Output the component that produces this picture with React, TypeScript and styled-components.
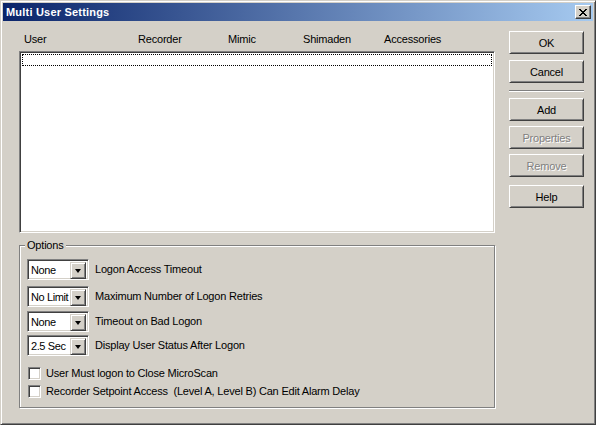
import styled, { createGlobalStyle } from "styled-components";

const face = "#d4d0c8";
const shadow = "#808080";
const darkShadow = "#404040";
const highlight = "#ffffff";

const GlobalStyle = createGlobalStyle`
  html, body {
    margin: 0;
    padding: 0;
    background: ${face};
  }
  body {
    font-family: "Liberation Sans", Arial, sans-serif;
    font-size: 11px;
    letter-spacing: -0.2px;
    color: #000;
  }
`;

const Window = styled.div`
  box-sizing: border-box;
  width: 596px;
  height: 425px;
  padding: 2px;
  background: ${face};
  border: 1px solid;
  border-color: ${face} ${darkShadow} ${darkShadow} ${face};
  box-shadow: inset 1px 1px ${highlight}, inset -1px -1px ${shadow};
  display: flex;
  flex-direction: column;
`;

const TitleBar = styled.div`
  height: 18px;
  padding: 0 2px 0 3px;
  display: flex;
  align-items: center;
  justify-content: space-between;
  background: linear-gradient(to right, #0a246a, #a6caf0);
`;

const Title = styled.span`
  color: #fff;
  font-weight: bold;
  font-size: 11px;
  letter-spacing: 0.2px;
  line-height: 13px;
`;

const CaptionButton = styled.div`
  box-sizing: border-box;
  width: 16px;
  height: 14px;
  display: flex;
  align-items: center;
  justify-content: center;
  background: ${face};
  border: 1px solid;
  border-color: ${highlight} ${darkShadow} ${darkShadow} ${highlight};
  box-shadow: inset -1px -1px ${shadow};
`;

const Body = styled.div`
  display: flex;
  padding: 10px 0 0 16px;
`;

const LeftColumn = styled.div`
  width: 476px;
  display: flex;
  flex-direction: column;
`;

const RightColumn = styled.div`
  width: 75px;
  margin-left: 14px;
  display: flex;
  flex-direction: column;
`;

const HeaderRow = styled.div`
  box-sizing: border-box;
  height: 20px;
  padding: 2px 0 0 5px;
  display: grid;
  grid-template-columns: 114px 90px 75px 81px 1fr;
  line-height: 13px;
`;

const ListBox = styled.div`
  box-sizing: border-box;
  height: 182px;
  background: #fff;
  border: 1px solid;
  border-color: ${shadow} ${highlight} ${highlight} ${shadow};
  box-shadow: inset 1px 1px ${darkShadow}, inset -1px -1px ${face};
  padding: 2px;
`;

const FocusRow = styled.div`
  height: 10px;
  border: 1px dotted #000;
`;

const GroupBox = styled.div`
  position: relative;
  box-sizing: border-box;
  height: 163px;
  margin-top: 12px;
  padding: 13px 0 0 7px;
  border: 1px solid ${shadow};
  box-shadow: inset 1px 1px ${highlight}, 1px 1px ${highlight};
  display: flex;
  flex-direction: column;
`;

const Legend = styled.span`
  position: absolute;
  top: -7px;
  left: 5px;
  padding: 0 2px;
  background: ${face};
  line-height: 13px;
`;

const OptionRow = styled.div<{ $gap: number }>`
  display: flex;
  align-items: center;
  height: 21px;
  margin-top: ${({ $gap }) => $gap}px;
`;

const Combo = styled.div`
  box-sizing: border-box;
  width: 62px;
  height: 21px;
  padding: 2px;
  display: flex;
  background: #fff;
  border: 1px solid;
  border-color: ${shadow} ${highlight} ${highlight} ${shadow};
  box-shadow: inset 1px 1px ${darkShadow}, inset -1px -1px ${face};
`;

const ComboText = styled.span`
  flex: 1;
  min-width: 0;
  padding-left: 1px;
  line-height: 17px;
  letter-spacing: -0.4px;
  white-space: nowrap;
`;

const ComboButton = styled.div`
  box-sizing: border-box;
  flex: none;
  width: 16px;
  height: 17px;
  display: flex;
  align-items: center;
  justify-content: center;
  background: ${face};
  border: 1px solid;
  border-color: ${face} ${darkShadow} ${darkShadow} ${face};
  box-shadow: inset 1px 1px ${highlight}, inset -1px -1px ${shadow};
`;

const Arrow = styled.div`
  width: 0;
  height: 0;
  border-left: 3.5px solid transparent;
  border-right: 3.5px solid transparent;
  border-top: 4px solid #000;
`;

const OptionLabel = styled.span`
  margin-left: 6px;
  line-height: 13px;
`;

const CheckRow = styled.label<{ $gap: number }>`
  display: flex;
  align-items: center;
  height: 13px;
  margin-top: ${({ $gap }) => $gap}px;
`;

const CheckBox = styled.div`
  box-sizing: border-box;
  width: 13px;
  height: 13px;
  margin-left: 1px;
  background: #fff;
  border: 1px solid;
  border-color: ${shadow} ${highlight} ${highlight} ${shadow};
  box-shadow: inset 1px 1px ${darkShadow}, inset -1px -1px ${face};
`;

const CheckLabel = styled.span`
  margin-left: 5px;
  line-height: 13px;
  white-space: pre;
`;

const Button = styled.div<{ $gap: number; $disabled?: boolean }>`
  box-sizing: border-box;
  height: 23px;
  padding-top: 1px;
  margin-top: ${({ $gap }) => $gap}px;
  display: flex;
  align-items: center;
  justify-content: center;
  background: ${face};
  border: 1px solid;
  border-color: ${highlight} ${darkShadow} ${darkShadow} ${highlight};
  box-shadow: inset 1px 1px ${face}, inset -1px -1px ${shadow};
  color: ${({ $disabled }) => ($disabled ? shadow : "#000")};
  text-shadow: ${({ $disabled }) => ($disabled ? `1px 1px 0 ${highlight}` : "none")};
`;

const Separator = styled.div`
  height: 0;
  margin: 7px 0 6px;
  border-top: 1px solid ${shadow};
  border-bottom: 1px solid ${highlight};
`;

const options = [
  { value: "None", label: "Logon Access Timeout", gap: 0 },
  { value: "No Limit", label: "Maximum Number of Logon Retries", gap: 6 },
  { value: "None", label: "Timeout on Bad Logon", gap: 4 },
  { value: "2.5 Sec", label: "Display User Status After Logon", gap: 3 },
];

const checks = [
  { label: "User Must logon to Close MicroScan", gap: 11 },
  { label: "Recorder Setpoint Access  (Level A, Level B) Can Edit Alarm Delay", gap: 5 },
];

export default function App() {
  return (
    <>
      <GlobalStyle />
      <Window>
        <TitleBar>
          <Title>Multi User Settings</Title>
          <CaptionButton>
            <svg width="8" height="7" viewBox="0 0 8 7" shapeRendering="crispEdges">
              <path d="M0 0h2v1h1v1h2v-1h1v-1h2v1h-1v1h-1v1h-1v1h1v1h1v1h1v1h-2v-1h-1v-1h-2v1h-1v1h-2v-1h1v-1h1v-1h1v-1h-1v-1h-1v-1h-1z" fill="#000" />
            </svg>
          </CaptionButton>
        </TitleBar>
        <Body>
          <LeftColumn>
            <HeaderRow>
              <span>User</span>
              <span>Recorder</span>
              <span>Mimic</span>
              <span>Shimaden</span>
              <span>Accessories</span>
            </HeaderRow>
            <ListBox>
              <FocusRow />
            </ListBox>
            <GroupBox>
              <Legend>Options</Legend>
              {options.map((o) => (
                <OptionRow key={o.label} $gap={o.gap}>
                  <Combo>
                    <ComboText>{o.value}</ComboText>
                    <ComboButton>
                      <Arrow />
                    </ComboButton>
                  </Combo>
                  <OptionLabel>{o.label}</OptionLabel>
                </OptionRow>
              ))}
              {checks.map((c) => (
                <CheckRow key={c.label} $gap={c.gap}>
                  <CheckBox />
                  <CheckLabel>{c.label}</CheckLabel>
                </CheckRow>
              ))}
            </GroupBox>
          </LeftColumn>
          <RightColumn>
            <Button $gap={0}>OK</Button>
            <Button $gap={6}>Cancel</Button>
            <Separator />
            <Button $gap={0}>Add</Button>
            <Button $gap={5} $disabled>
              Properties
            </Button>
            <Button $gap={5} $disabled>
              Remove
            </Button>
            <Button $gap={8}>Help</Button>
          </RightColumn>
        </Body>
      </Window>
    </>
  );
}
